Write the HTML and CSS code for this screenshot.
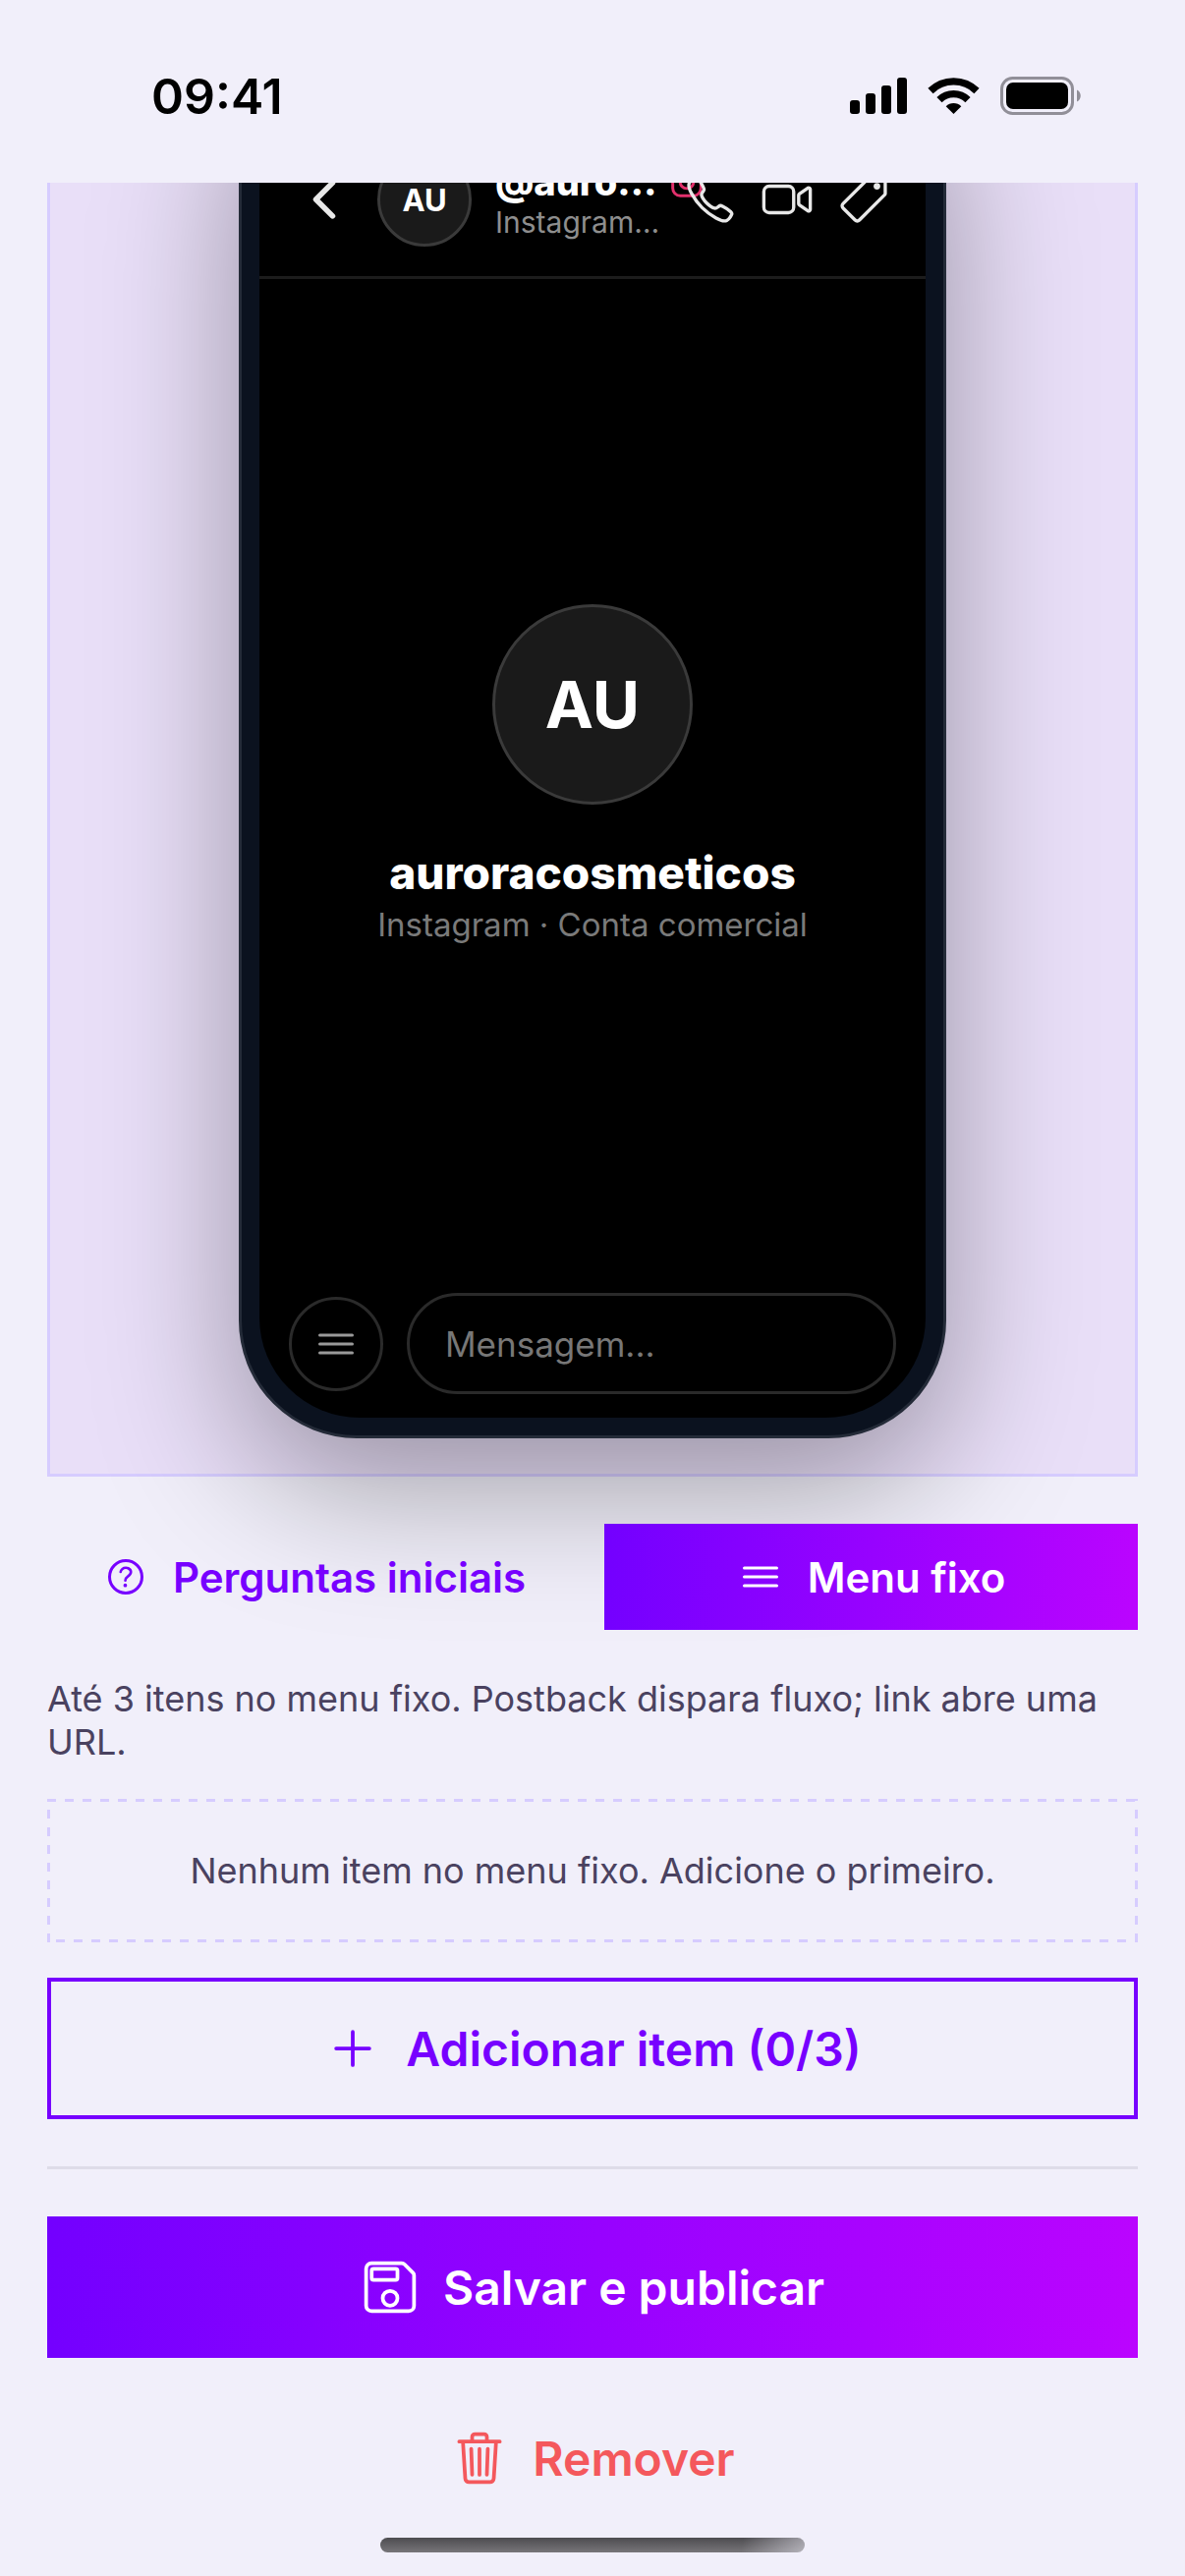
FILE: index.html
```html
<!DOCTYPE html>
<html lang="pt-BR">
<head>
<meta charset="utf-8">
<meta name="viewport" content="width=device-width, initial-scale=1">
<title>Menu fixo</title>
<link rel="stylesheet" href="styles.css">
</head>
<body>
<header class="status-bar">
  <span class="status-time">09:41</span>
  <svg class="status-icons" viewBox="0 0 236 40" aria-hidden="true">
    <rect x="0" y="24" width="10" height="14" rx="3"/>
    <rect x="16" y="17" width="10" height="21" rx="3"/>
    <rect x="32" y="9" width="10" height="29" rx="3"/>
    <rect x="48" y="1" width="10" height="37" rx="3"/>
    <path d="M82 14.5a33.4 33.4 0 0 1 47 0" fill="none" stroke="#000" stroke-width="7.4"/>
    <path d="M91 23.6a20.6 20.6 0 0 1 29 0" fill="none" stroke="#000" stroke-width="7.4"/>
    <path d="M105.5 38l-7.8-7.8a11 11 0 0 1 15.6 0z"/>
    <rect x="154.5" y="1.5" width="72" height="36" rx="11" fill="none" stroke="#918f98" stroke-width="3"/>
    <rect x="159" y="6" width="63" height="27" rx="7"/>
    <path d="M231 13.5c5 2 5 10 0 12z" fill="#918f98"/>
  </svg>
</header>

<main class="viewport">
  <div class="content">
    <section class="preview" aria-label="Prévia">
      <div class="phone">
        <div class="screen">
          <div class="chat-header">
            <svg class="icon icon-lg" viewBox="0 0 512 512" aria-hidden="true"><path d="M328 112L184 256l144 144" stroke-width="48"/></svg>
            <span class="avatar avatar-sm">AU</span>
            <div class="chat-title">
              <div class="chat-name">
                <span>@auro…</span>
                <svg class="icon icon-xs instagram" viewBox="0 0 512 512" aria-hidden="true"><rect x="52" y="52" width="408" height="408" rx="110" stroke-width="42"/><circle cx="256" cy="256" r="98" stroke-width="42"/><circle cx="376" cy="136" r="27" fill="currentColor" stroke="none"/></svg>
              </div>
              <div class="chat-sub">Instagram…</div>
            </div>
            <div class="chat-actions">
              <svg class="icon icon-md" viewBox="0 0 512 512" aria-hidden="true"><path d="M451 374c-15.88-16-54.34-39.35-73-48.76-24.3-12.24-26.3-13.24-45.4.95-12.74 9.47-21.21 17.93-36.12 14.75s-47.31-21.11-75.68-49.39-47.34-61.62-50.53-76.48 5.41-23.23 14.79-36c13.22-18 12.22-21 .92-45.3-8.81-18.9-32.84-57-48.9-72.8C119.9 44 119.9 47 108.83 51.6A160.15 160.15 0 0083 65.37C67 76 58.12 84.83 51.91 98.1s-9 44.38 23.07 102.64 54.57 88.05 101.14 134.49S258.5 406.64 310.85 436c64.76 36.27 89.6 29.2 102.91 23s22.18-15 32.83-31a159.09 159.09 0 0013.8-25.8C465 391.17 468 391.17 451 374z"/></svg>
              <svg class="icon icon-md" viewBox="0 0 512 512" aria-hidden="true"><path d="M374.79 308.78L457.5 367a16 16 0 0022.5-14.62V159.62A16 16 0 00457.5 145l-82.71 58.22A16 16 0 00368 216.3v79.4a16 16 0 006.79 13.08z"/><path d="M268 384H84a52.15 52.15 0 01-52-52V180a52.15 52.15 0 0152-52h184.48A51.68 51.68 0 01320 179.52V332a52.15 52.15 0 01-52 52z"/></svg>
              <svg class="icon icon-md" viewBox="0 0 512 512" aria-hidden="true"><path d="M435.25 48h-122.9a14.46 14.46 0 00-10.2 4.2L56.45 297.9a28.85 28.85 0 000 40.7l117 117a28.85 28.85 0 0040.7 0L459.75 210a14.46 14.46 0 004.2-10.2v-123a28.66 28.66 0 00-28.7-28.8z"/><circle cx="384" cy="128" r="32" fill="currentColor" stroke="none"/></svg>
            </div>
          </div>
          <div class="chat-body">
            <span class="avatar avatar-lg">AU</span>
            <div class="profile-name">auroracosmeticos</div>
            <div class="profile-sub">Instagram · Conta comercial</div>
          </div>
          <div class="composer">
            <button class="composer-menu" type="button" aria-label="Menu">
              <svg class="icon icon-sm" viewBox="0 0 512 512" aria-hidden="true"><path d="M80 160h352M80 256h352M80 352h352"/></svg>
            </button>
            <input class="composer-input" type="text" placeholder="Mensagem..." aria-label="Mensagem">
          </div>
        </div>
      </div>
    </section>

    <div class="tabs">
      <button class="tab" type="button">
        <svg class="icon icon-sm" viewBox="0 0 512 512" aria-hidden="true"><circle cx="256" cy="256" r="176"/><path d="M200 202.29s.84-17.5 19.57-32.57C230.68 160.77 244 158.18 256 158c10.93-.14 20.69 1.67 26.53 4.45 10 4.76 29.47 16.38 29.47 41.09 0 26-17 37.81-36.37 50.8S251 281.43 251 296" stroke-width="28"/><circle cx="250" cy="348" r="20" fill="currentColor" stroke="none"/></svg>
        <span>Perguntas iniciais</span>
      </button>
      <button class="tab tab-active" type="button">
        <svg class="icon icon-sm" viewBox="0 0 512 512" aria-hidden="true"><path d="M80 160h352M80 256h352M80 352h352"/></svg>
        <span>Menu fixo</span>
      </button>
    </div>

    <p class="hint">Até 3 itens no menu fixo. Postback dispara fluxo; link abre uma URL.</p>
    <div class="empty">Nenhum item no menu fixo. Adicione o primeiro.</div>

    <button class="btn btn-outline" type="button">
      <svg class="icon icon-lg" viewBox="0 0 512 512" aria-hidden="true"><path d="M256 112v288M400 256H112"/></svg>
      <span>Adicionar item (0/3)</span>
    </button>

    <hr class="divider">

    <button class="btn btn-primary" type="button">
      <svg class="icon icon-lg" viewBox="0 0 512 512" aria-hidden="true"><path d="M380.93 57.37A32 32 0 00358.3 48H94.22A46.21 46.21 0 0048 94.22v323.56A46.21 46.21 0 0094.22 464h323.56A46.36 46.36 0 00464 417.78V153.7a32 32 0 00-9.37-22.63z"/><circle cx="256" cy="352" r="64"/><rect x="96" y="96" width="224" height="96" rx="16"/></svg>
      <span>Salvar e publicar</span>
    </button>
    <button class="btn btn-danger" type="button">
      <svg class="icon icon-lg" viewBox="0 0 512 512" aria-hidden="true"><path d="M112 112l20 320c.95 18.49 14.4 32 32 32h184c17.67 0 30.87-13.51 32-32l20-320M80 112h352M192 112V72a23.93 23.93 0 0124-24h80a23.93 23.93 0 0124 24v40M256 176v224M184 176l8 224M328 176l-8 224"/></svg>
      <span>Remover</span>
    </button>
  </div>
</main>
<footer class="home-area"><div class="home-indicator"></div></footer>
</body>
</html>
```
FILE: styles.css
```css
:root {
  --bg: #f1effa;
  --violet: #7700ff;
  --line: #d6ccff;
  --text: #4a4260;
  --gradient: linear-gradient(95deg, #7300ff, #bb04ff);
}

* {
  box-sizing: border-box;
}

body {
  margin: 0;
  background: var(--bg);
  color: var(--text);
  font-family: Inter, "Liberation Sans", sans-serif;
}

button,
input {
  margin: 0;
  padding: 0;
  border: 0;
  background: none;
  color: inherit;
  font: inherit;
}

.icon {
  flex: none;
  fill: none;
  stroke: currentColor;
  stroke-width: 32px;
  stroke-linecap: round;
  stroke-linejoin: round;
}

.icon [stroke-width="48"] { stroke-width: 48px; }
.icon [stroke-width="42"] { stroke-width: 42px; }
.icon [stroke-width="28"] { stroke-width: 28px; }

.icon-xs { width: 36px; height: 36px; }
.icon-sm { width: 48px; height: 48px; }
.icon-md { width: 54px; height: 54px; }
.icon-lg { width: 60px; height: 60px; }

/* Status bar */
.status-bar {
  display: flex;
  align-items: center;
  justify-content: space-between;
  height: 186px;
  padding: 10px 105px 0 154px;
  color: #000;
}

.status-time {
  font-size: 50px;
  font-weight: 600;
  line-height: 60px;
}

.status-icons {
  width: 236px;
  height: 40px;
}

/* The content sits scrolled a little under the status bar */
.viewport {
  overflow: hidden;
}

.content {
  display: flex;
  flex-direction: column;
  margin-top: -181px;
  padding: 0 48px;
}

/* Preview */
.preview {
  display: flex;
  justify-content: center;
  padding: 36px;
  border: 3px solid var(--line);
  background: #e9dff8;
}

.phone {
  width: 100%;
  max-width: 720px;
  padding: 18px;
  border: 3px solid #242b38;
  border-radius: 120px;
  background: #0b121f;
  box-shadow: 0 48px 144px rgba(0, 0, 0, 0.35);
}

.screen {
  overflow: hidden;
  padding-top: 60px;
  border-radius: 102px;
  background: #000;
}

.chat-header {
  display: flex;
  align-items: center;
  gap: 24px;
  padding: 30px 36px;
  border-bottom: 3px solid #1c1c1c;
  color: #e8e8e8;
}

.avatar {
  display: flex;
  flex: none;
  align-items: center;
  justify-content: center;
  border: 3px solid #3a3a3a;
  border-radius: 50%;
  background: #1a1a1a;
  color: #fff;
  font-weight: 700;
}

.avatar-sm {
  width: 96px;
  height: 96px;
  font-size: 31px;
}

.avatar-lg {
  width: 204px;
  height: 204px;
  margin-bottom: 42px;
  font-size: 66px;
}

.chat-title {
  flex: 1;
  min-width: 0;
}

.chat-name {
  display: flex;
  align-items: center;
  gap: 12px;
  color: #fff;
  font-size: 38px;
  font-weight: 800;
  line-height: 46px;
}

.instagram {
  color: #e1306c;
}

.chat-sub {
  color: #8e8e8e;
  font-size: 30px;
  line-height: 36px;
}

.chat-actions {
  display: flex;
  gap: 24px;
}

.chat-body {
  display: flex;
  flex-direction: column;
  align-items: center;
  justify-content: center;
  min-height: 1008px;
}

.profile-name {
  margin-bottom: 6px;
  color: #fff;
  font-size: 46px;
  font-weight: 800;
  line-height: 54px;
}

.profile-sub {
  color: #7a7a7a;
  font-size: 33px;
  line-height: 40px;
}

.composer {
  display: flex;
  align-items: center;
  gap: 24px;
  padding: 24px 30px;
}

.composer-menu {
  display: flex;
  flex: none;
  align-items: center;
  justify-content: center;
  width: 96px;
  height: 96px;
  border: 3px solid #2a2a2a;
  border-radius: 50%;
  color: #999;
}

.composer-input {
  flex: 1;
  min-width: 0;
  height: 103px;
  padding: 0 36px;
  border: 3px solid #2a2a2a;
  border-radius: 52px;
  color: #fff;
  font-size: 35px;
}

.composer-input::placeholder {
  color: #777;
  opacity: 1;
}

/* Tabs */
.tabs {
  display: flex;
  gap: 24px;
  margin-top: 48px;
}

.tab {
  display: flex;
  flex: 1;
  align-items: center;
  justify-content: center;
  gap: 24px;
  height: 108px;
  color: var(--violet);
  font-size: 42px;
  font-weight: 600;
}

.tab-active {
  background: var(--gradient);
  color: #fff;
}

.hint {
  margin: 48px 0 36px;
  font-size: 36px;
  line-height: 44px;
}

.empty {
  padding: 51px;
  background:
    repeating-linear-gradient(90deg, var(--line) 0 9px, transparent 9px 18px) top / 100% 3px no-repeat,
    repeating-linear-gradient(90deg, transparent 0 9px, var(--line) 9px 18px) bottom / 100% 3px no-repeat,
    repeating-linear-gradient(0deg, var(--line) 0 9px, transparent 9px 18px) left / 3px 100% no-repeat,
    repeating-linear-gradient(0deg, var(--line) 0 9px, transparent 9px 18px) right / 3px 100% no-repeat;
  font-size: 36px;
  line-height: 44px;
  text-align: center;
}

/* Actions */
.btn {
  display: flex;
  align-items: center;
  justify-content: center;
  gap: 24px;
  height: 144px;
  font-size: 48px;
  font-weight: 600;
}

.btn-outline {
  margin-top: 36px;
  border: 4px solid var(--violet);
  color: var(--violet);
}

.btn-primary {
  background: var(--gradient);
  color: #fff;
}

.btn-danger {
  margin-top: 30px;
  color: #f4585c;
}

.divider {
  width: 100%;
  height: 3px;
  margin: 48px 0;
  border: 0;
  background: #dedce8;
}

.home-area {
  display: flex;
  justify-content: center;
  padding: 9px 0 24px;
}

.home-indicator {
  width: 432px;
  height: 15px;
  border-radius: 8px;
  background: linear-gradient(100deg, transparent 85%, rgba(241, 239, 250, 0.5)), linear-gradient(#4d4c50, #777579);
}
```
